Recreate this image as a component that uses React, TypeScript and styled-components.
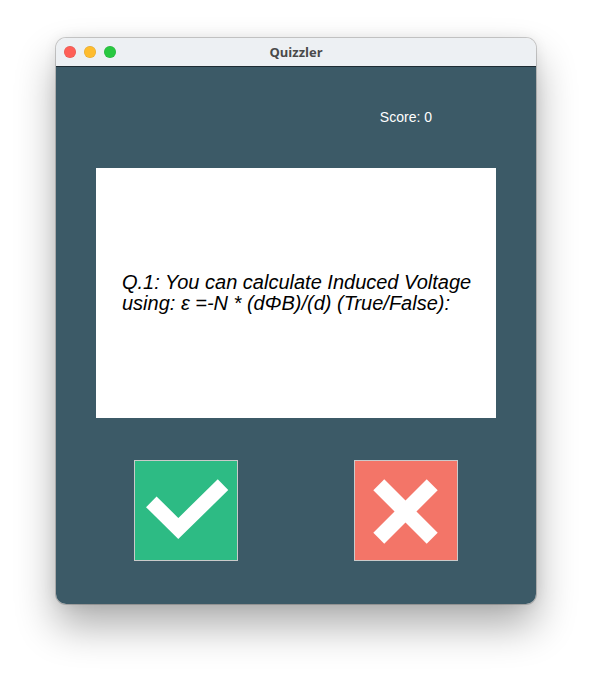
import React, { useState } from "react";
import styled, { createGlobalStyle } from "styled-components";

const GlobalStyle = createGlobalStyle`
  html, body {
    margin: 0;
    padding: 0;
    background: #ffffff;
  }
  body {
    font-family: "Liberation Sans", Arial, sans-serif;
  }
`;

const Page = styled.div`
  width: 592px;
  height: 679px;
  padding: 38px 56px 0;
  box-sizing: border-box;
  background: #ffffff;
`;

const Window = styled.div`
  width: 480px;
  height: 566px;
  border-radius: 10px;
  overflow: hidden;
  display: flex;
  flex-direction: column;
  box-shadow: 0 0 0 1px rgba(0, 0, 0, 0.18), 0 22px 40px rgba(0, 0, 0, 0.32),
    0 0 14px rgba(0, 0, 0, 0.08);
`;

const TitleBar = styled.div`
  position: relative;
  height: 28px;
  flex: none;
  background: #edf0f3;
  border-bottom: 1px solid #1d2b33;
  display: flex;
  align-items: center;
  justify-content: center;
`;

const Lights = styled.div`
  position: absolute;
  left: 8px;
  top: 8px;
  display: flex;
  gap: 8px;
`;

const Light = styled.span<{ $color: string }>`
  width: 12px;
  height: 12px;
  border-radius: 50%;
  background: ${(p) => p.$color};
  box-shadow: inset 0 0 0 0.5px rgba(0, 0, 0, 0.12);
`;

const Title = styled.span`
  font-family: "Open Sans", "Liberation Sans", sans-serif;
  font-weight: 700;
  font-size: 13px;
  color: #4a4a4a;
`;

const Content = styled.div`
  flex: 1;
  background: #3c5a67;
  padding: 42px 40px 0;
  display: flex;
  flex-direction: column;
`;

const ScoreRow = styled.div`
  display: flex;
  justify-content: flex-end;
  padding-right: 64px;
  height: 16px;
`;

const Score = styled.span`
  color: #ffffff;
  font-size: 14px;
  line-height: 16px;
`;

const Card = styled.div`
  margin-top: 43px;
  height: 250px;
  background: #ffffff;
  display: flex;
  align-items: center;
  padding: 0 16px 0 26px;
  box-sizing: border-box;
`;

const Question = styled.p`
  margin: 0;
  font-style: italic;
  font-size: 20px;
  line-height: 21px;
  color: #000000;
`;

const Buttons = styled.div`
  margin-top: 42px;
  display: flex;
  justify-content: space-between;
  padding: 0 38px;
`;

const AnswerButton = styled.button<{ $bg: string }>`
  width: 104px;
  height: 101px;
  padding: 0;
  border: 1.5px solid #cacaca;
  background: ${(p) => p.$bg};
  cursor: pointer;
  display: block;
  box-sizing: border-box;

  svg {
    display: block;
  }
`;

const CheckIcon = () => (
  <svg width="101" height="98" viewBox="0 0 101 98">
    <polyline
      points="16.3,39.8 43.3,66.5 88,22.7"
      fill="none"
      stroke="#ffffff"
      strokeWidth="15"
      strokeLinejoin="miter"
      strokeLinecap="butt"
    />
  </svg>
);

const CrossIcon = () => (
  <svg width="101" height="98" viewBox="0 0 101 98">
    <g stroke="#ffffff" strokeWidth="15.5" strokeLinecap="butt">
      <line x1="23.8" y1="22.8" x2="77.2" y2="76.2" />
      <line x1="77.2" y1="22.8" x2="23.8" y2="76.2" />
    </g>
  </svg>
);

export default function App() {
  const [score, setScore] = useState(0);

  return (
    <>
      <GlobalStyle />
      <Page>
        <Window>
          <TitleBar>
            <Lights>
              <Light $color="#fe5f57" />
              <Light $color="#febc2e" />
              <Light $color="#28c840" />
            </Lights>
            <Title>Quizzler</Title>
          </TitleBar>
          <Content>
            <ScoreRow>
              <Score>Score: {score}</Score>
            </ScoreRow>
            <Card>
              <Question>
                Q.1: You can calculate Induced Voltage using: ε =-N * (dΦB)/(d)
                (True/False):
              </Question>
            </Card>
            <Buttons>
              <AnswerButton $bg="#2dbb84" onClick={() => setScore(score)}>
                <CheckIcon />
              </AnswerButton>
              <AnswerButton $bg="#f37568" onClick={() => setScore(score)}>
                <CrossIcon />
              </AnswerButton>
            </Buttons>
          </Content>
        </Window>
      </Page>
    </>
  );
}
